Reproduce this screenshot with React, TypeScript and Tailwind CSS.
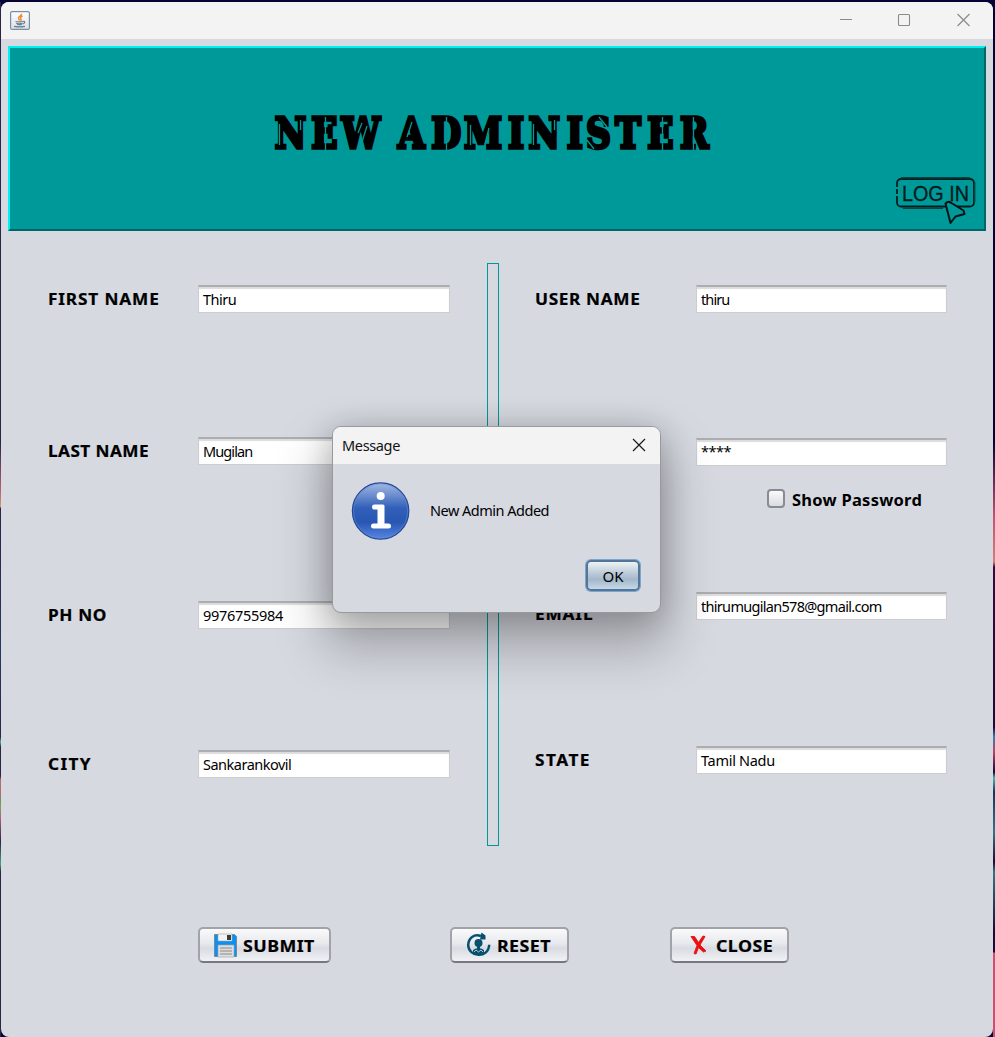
import React from "react";

type FieldProps = { label: string; value: string; gap: string; right?: boolean; spacing: string; labelSpacing?: string; labelShift?: string; password?: boolean };

function Field({ label, value, gap, right, spacing, labelSpacing = "tracking-[0.6px]", labelShift = "pt-0", password }: FieldProps) {
  return (
    <div className={`flex h-7 items-start ${gap}`}>
      <div className={`shrink-0 ${labelShift} ${right ? "w-[161px]" : "w-[150px]"}`}>
        <span className={`inline-block origin-left scale-x-[1.075] whitespace-nowrap font-['Noto_Sans',sans-serif] text-[16px] leading-7 font-bold text-black [-webkit-text-stroke:0.2px_#000] ${labelSpacing}`}>
          {label}
        </span>
      </div>
      <div className="h-7 w-[252px] border border-t-2 border-[#cdcdcf] border-t-[#acadb0] bg-white pl-1 shadow-[inset_0_2px_1px_#dcdcdc]">
        <span className={`block whitespace-nowrap font-['Noto_Sans',sans-serif] text-[14.5px] text-black ${spacing} ${password ? "leading-[23px]" : "leading-[25px]"}`}>{value}</span>
      </div>
    </div>
  );
}

function Title() {
  return (
    <svg className="overflow-visible" width="460" height="54" viewBox="263 106 460 54" aria-label="NEW ADMINISTER">
      <g transform="scale(.8 1)" fill="#000" stroke="#000" strokeWidth="3.6">
        <text
          y="148.500"
          x="343.500 389 427 480 497.500 539 580 635 660.500 708.500 732.500 769 809 850"
          fontFamily="'DejaVu Serif', serif"
          fontWeight="700"
          fontSize="43"
        >
          NEW ADMINISTER
        </text>
      </g>
      <g stroke="#009999" strokeWidth="1.300" fill="none">
        <path d="M279.500 124v21M300.500 120v10M325.500 117v33M358 133l4-10M362 142l5-16M407 137l5-15M446.500 117v33M470.500 125v20M485 144l4-16M533.500 124v21M554.500 120v10M587 140l7 9M599 117l8 10M624 117v0M662.500 117v33M693.500 117v33" />
      </g>
    </svg>
  );
}

function JavaIcon() {
  return (
    <svg width="20" height="19" viewBox="0 0 20 19">
      <defs>
        <linearGradient id="java" x2="0" y2="1">
          <stop stopColor="#fff" />
          <stop offset="1" stopColor="#dce0e5" />
        </linearGradient>
      </defs>
      <rect x=".6" y=".6" width="18.800" height="17.800" rx="1.500" fill="url(#java)" stroke="#7890a3" strokeWidth="1.200" />
      <path d="M11.500 2.800c.8 2-3.500 2.600-3 4.400.1 1 1 1.600 1 2.400M12.500 5c-2 1-2.500 2-1.500 3.200.4.600 0 1.200-.5 1.700" stroke="#ed8b35" strokeWidth="1.500" fill="none" />
      <path d="M5.500 10.500q4 .9 7.500 0M6 12.300q3 .9 6.500 0M7 13.500q2.500.7 5 0M13 10.300c3-.5 1.500 2.500-.2 2.700M4 15.300q5 1 11 0" stroke="#688297" strokeWidth="1.200" fill="none" />
    </svg>
  );
}

function LoginBadge() {
  return (
    <svg className="overflow-visible" width="80" height="50" viewBox="896 176 80 50" aria-label="LOG IN">
      <rect x="897" y="179" width="77" height="27.500" rx="4" fill="none" stroke="#001c1c" strokeWidth="1.800" />
      <path d="M901 177.700h69M903 208.300h40M974.700 182v20" stroke="#004444" strokeWidth="1.400" />
      <path d="M896 188h3M896 195h3" stroke="#009999" strokeWidth="2" />
      <text x="902" y="201" textLength="67" lengthAdjust="spacingAndGlyphs" fontFamily="'Liberation Sans', sans-serif" fontSize="22.500" fill="#001c1c" stroke="#001c1c" strokeWidth=".3">
        LOG IN
      </text>
      <path d="M945.500 203.500l5 19.500 5-6.500 9-2.500-1-3.500-12-7.500q-3-2.500-6 .5Z" fill="#009999" stroke="#001515" strokeWidth="2" strokeLinejoin="round" />
    </svg>
  );
}

function SaveIcon() {
  return (
    <svg width="25" height="25" viewBox="0 0 25 25">
      <path d="M1.500 1.500h20l2 2v20h-22Z" fill="#0b91f3" stroke="#718a9c" strokeWidth="1" />
      <path d="M5 1h14v7H5Z" fill="#f3f3f3" stroke="#a6a6a6" strokeWidth=".6" />
      <path d="M14 2h4v5h-4Z" fill="#3c3c3c" />
      <path d="M5 12h16v12H5Z" fill="#ddd" stroke="#a3a3a3" strokeWidth=".6" />
      <path d="M7 15h12M7 18h12M7 21h12" stroke="#a5a5a5" strokeWidth="1.300" />
    </svg>
  );
}

function ResetIcon() {
  return (
    <svg width="25" height="26" viewBox="0 0 25 26">
      <path d="M15 4C8 1.500 2.500 6 2.200 13c-.1 12 20.300 14.300 21-.2" fill="none" stroke="#07516f" strokeWidth="2.500" />
      <path d="M15.500.5l4 3v4h-5.500Z" fill="#07516f" />
      <circle cx="12.500" cy="11" r="4" fill="#07516f" />
      <path d="M11 13h3v4h-3ZM7 18q5.500-4 11 0v3q-5.500 3.500-11 0Z" fill="#07516f" />
      <path d="M8 20l2-2 2.500 2 2.500-2 2 2" fill="none" stroke="#b0c8d2" strokeWidth="1" />
    </svg>
  );
}

function CrossIcon() {
  return (
    <svg width="17" height="20" viewBox="0 0 17 20">
      <path d="M1 1.500h3.500l4 6L13 1l2 .5-5 8.500 6 6-2.500 1-5-4.500L6 19l-2-.5 3-8Z" fill="#f50b0b" stroke="#dc2020" strokeWidth="1" />
    </svg>
  );
}

function ActionButton({ icon, text, className }: { icon: React.ReactNode; text: string; className: string }) {
  return (
    <button className={`flex h-9 items-center rounded-[5px] border-2 border-[#a2a3a8] border-b-[#77787e] bg-[linear-gradient(#fafafb,#e8e9ed_45%,#d8dbe2_60%,#f1f2f5)] font-['Noto_Sans',sans-serif] text-[16.5px] font-bold text-black ${className}`}>
      {icon}
      <span className="inline-block origin-left scale-x-[1.08] pt-[2px] tracking-[0.4px] [-webkit-text-stroke:0.2px_#000]">{text}</span>
    </button>
  );
}

function MessageDialog() {
  return (
    <div className="absolute top-[426px] left-[332px] h-[187px] w-[329px] overflow-hidden rounded-[9px] border border-[#98999d] bg-[#d6d9e0] shadow-[0_28px_50px_8px_rgba(0,0,0,0.25),0_3px_30px_rgba(0,0,0,0.2)]">
      <div className="flex h-[37px] items-center justify-between bg-[#f3f3f3] pr-[14px] pl-[9px]">
        <span className="font-['Noto_Sans',sans-serif] text-[14.5px] tracking-[-0.35px] text-[#111]">Message</span>
        <svg className="mb-[2px]" width="14" height="14" viewBox="0 0 14 14">
          <path d="M1 1l12 12M13 1L1 13" stroke="#181818" strokeWidth="1.200" />
        </svg>
      </div>
      <div className="flex items-center pt-[18px] pl-[18px]">
        <svg width="60" height="60" viewBox="0 0 60 60">
          <defs>
            <linearGradient id="info" x2="0" y2="1">
              <stop stopColor="#a5b9e4" />
              <stop offset=".45" stopColor="#315fb9" />
              <stop offset=".7" stopColor="#2857b3" />
              <stop offset="1" stopColor="#5786e3" />
            </linearGradient>
          </defs>
          <circle cx="29.600" cy="29" r="28.200" fill="url(#info)" stroke="#244794" strokeWidth="1.200" />
          <circle cx="29.600" cy="29" r="27" fill="none" stroke="#6c91d8" strokeOpacity=".5" />
          <circle cx="29.700" cy="14" r="4" fill="#fff" />
          <path d="M23 22.500h9q1.500 0 1.500 1.500v17.500h4q2.500 0 2.500 2.500t-2.500 2.500H22.500Q20 46.500 20 44t2.500-2.500h4v-14H23q-2 0-2-2.500t2-2.500Z" fill="#fff" />
        </svg>
        <span className="mb-[2px] ml-[19px] font-['Noto_Sans',sans-serif] text-[14.5px] tracking-[-0.5px] text-black">New Admin Added</span>
      </div>
      <div className="mt-[18px] flex justify-end pr-[20px]">
        <button className="h-[31px] w-[54px] rounded-[5px] border-2 border-[#51769a] bg-[linear-gradient(#eef2f5,#b8c7d6_45%,#a4b8ca_65%,#c6d8e7)] font-['Noto_Sans',sans-serif] text-[15px] leading-[28px] shadow-[0_0_0_1px_#7ca6ce]">OK</button>
      </div>
    </div>
  );
}

export default function App() {
  return (
    <div className="relative flex h-[1037px] w-[995px] overflow-hidden bg-[#050333] pt-[2px]">
      <div className="h-full w-px shrink-0 bg-[linear-gradient(#292548_0_440px,#be6370_490px,#d09a70_505px,#292548_506px,#273765_650px,#292548_735px,#51b283_740px,#292548_745px,#292548_774px,#bb6875_778px,#b8686d_793px,#5a9d54_797px,#86a054_805px,#b66279_815px,#292548_840px,#4ba176_862px,#292548_870px)]" />
      <main className="h-[1035px] w-[992px] shrink-0 overflow-hidden rounded-[8px] bg-[#d6d9e0]">
        <header className="flex h-[37px] items-center justify-between bg-[#f3f3f3] pr-[23px] pb-[1px] pl-[9px]">
          <JavaIcon />
          <svg width="132" height="16" viewBox="0 0 132 16">
            <path d="M2 7.500h12M119.500 2l12 12M131.500 2l-12 12" stroke="#8a8a8a" strokeWidth="1.100" />
            <rect x="60.500" y="2.500" width="11" height="11" rx="1" fill="none" stroke="#8a8a8a" strokeWidth="1.100" />
          </svg>
        </header>
        <section className="mt-[7px] ml-[7px] h-[185px] w-[978px] border-2 border-t-[#00f1f1] border-r-[#006666] border-b-[#006666] border-l-[#00f1f1] bg-[#009999] pt-[58px]">
          <h1 className="ml-[253px] flex h-[54px]"><Title /></h1>
          <div className="mt-[16px] mr-[8px] flex justify-end"><LoginBadge /></div>
        </section>
        <section className="mt-[32px] ml-[47px] flex h-[583px]">
          <div className="w-[439px] shrink-0">
            <Field label="FIRST NAME" value="Thiru" gap="mt-[22px]" spacing="tracking-[-0.5px]" labelSpacing="tracking-[0.8px]" />
            <Field label="LAST NAME" value="Mugilan" gap="mt-[124px]" spacing="tracking-[-0.9px]" labelSpacing="tracking-[0.4px]" />
            <Field label="PH NO" value="9976755984" gap="mt-[136px]" spacing="tracking-[-0.3px]" />
            <Field label="CITY" value="Sankarankovil" gap="mt-[121px]" spacing="tracking-[-0.5px]" labelSpacing="tracking-[1.3px]" />
          </div>
          <div className="w-3 shrink-0 border border-[#009999]" />
          <div className="ml-[36px] w-[412px]">
            <Field right label="USER NAME" value="thiru" gap="mt-[22px]" spacing="tracking-[-0.9px]" />
            <Field right label="PASSWORD" value="****" gap="mt-[125px]" spacing="tracking-[-0.5px]" password />
            <label className="mt-[22px] flex h-[21px] items-center pl-[232px]">
              <span className="mr-[7px] h-[19px] w-[18px] rounded-[4px] border-2 border-[#888b92] bg-[linear-gradient(#fafafa,#d9dce3)]" />
              <span className="whitespace-nowrap pt-[3px] font-['Noto_Sans',sans-serif] text-[16.5px] font-bold tracking-[0.25px] text-black">Show Password</span>
            </label>
            <Field right label="EMAIL" value="thirumugilan578@gmail.com" gap="mt-[83px]" spacing="tracking-[-0.7px]" labelShift="pt-[8px]" labelSpacing="tracking-[0.8px]" />
            <Field right label="STATE" value="Tamil Nadu" gap="mt-[126px]" spacing="tracking-[-0.3px]" labelSpacing="tracking-[1.4px]" />
          </div>
        </section>
        <div className="mt-[81px] ml-[197px] flex">
          <ActionButton className="w-[133px] gap-[5px] pl-[13px]" icon={<SaveIcon />} text="SUBMIT" />
          <ActionButton className="ml-[119px] w-[119px] gap-[6px] pl-[14px]" icon={<ResetIcon />} text="RESET" />
          <ActionButton className="ml-[101px] w-[119px] gap-[9px] pl-[18px]" icon={<CrossIcon />} text="CLOSE" />
        </div>
      </main>
      <div className="w-[2px] shrink-0 bg-[linear-gradient(#050333_0_440px,#6a2d55_480px,#c45370_515px,#d18079_560px,#330a3b_565px,#180b38_725px,#347faa_735px,#b4456a_750px,#180b38_770px,#45b5b2_776px,#16355f_790px,#337589_830px,#180b38_860px,#2f7787_870px,#180b38_930px,#180b38_950px,#cf4e6d_951px)]" />
      <MessageDialog />
    </div>
  );
}
